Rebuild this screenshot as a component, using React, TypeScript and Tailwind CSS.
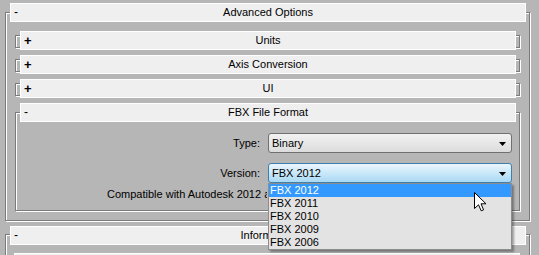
const etched = "box-border border border-[#7b7b7b] shadow-[inset_1px_1px_0_#ffffff,1px_1px_0_#ffffff]";
const header =
  "box-border h-[19px] border border-white bg-[#efefef] flex items-center relative";

function Header({ title, sign, width, className = "", clip }: { title: string; sign: string; width: string; className?: string; clip?: string }) {
  return (
    <div className={header + " " + width + " " + className}>
      <span className={"absolute left-[3px] top-[1px] leading-[15px] " + (sign === "+" ? "font-bold text-[13px]" : "text-[12px]")}>
        {sign}
      </span>
      {clip ? (
        <div className={"h-[15px] overflow-hidden " + clip}>
          <div className="w-[514px] text-center leading-[15px]">{title}</div>
        </div>
      ) : (
        <span className="w-full text-center leading-[15px]">{title}</span>
      )}
    </div>
  );
}

function Collapsed({ title, mt }: { title: string; mt: string }) {
  return (
    <div className={etched + " ml-[9px] w-[505px] h-[13px] " + mt}>
      <Header title={title} sign="+" width="w-[496px]" className="-mt-[5px] ml-[4px]" />
    </div>
  );
}

function Arrow() {
  return (
    <svg width="7" height="4" viewBox="0 0 7 4" className="absolute right-[5px] top-[8px]">
      <polygon points="0,0 7,0 3.5,4" fill="#000" />
    </svg>
  );
}

export default function App() {
  const versions = ["FBX 2012", "FBX 2011", "FBX 2010", "FBX 2009", "FBX 2006"];
  return (
    <div
      className="relative w-[539px] h-[255px] overflow-hidden bg-[#b6b6b6] text-[11px] text-black"
      style={{ fontFamily: '"Liberation Sans", Arial, sans-serif' }}
    >
      {/* Advanced Options */}
      <div className={etched + " mt-[12px] ml-[5px] w-[525px] h-[209px]"}>
        <Header title="Advanced Options" sign="-" width="w-[516px]" className="-mt-[10px] ml-[4px]" />

        <Collapsed title="Units" mt="mt-[13px]" />
        <Collapsed title="Axis Conversion" mt="mt-[11px]" />
        <Collapsed title="UI" mt="mt-[11px]" />

        {/* FBX File Format */}
        <div className={etched + " mt-[16px] ml-[9px] w-[505px] h-[99px]"}>
          <Header title="FBX File Format" sign="-" width="w-[496px]" className="-mt-[10px] ml-[4px]" />

          <div className="mt-[11px] flex items-center gap-[8px]">
            <span className="w-[244px] text-right">Type:</span>
            <div className="relative box-border h-[20px] w-[244px] rounded-[3px] border border-[#707070] bg-gradient-to-b from-[#f2f2f2] to-[#dcdcdc] pl-[3px] leading-[18px]">
              Binary
              <Arrow />
            </div>
          </div>

          <div className="mt-[10px] flex items-center gap-[8px]">
            <span className="w-[244px] text-right">Version:</span>
            <div className="relative box-border h-[20px] w-[244px] rounded-[3px] border border-[#3c7fb1] bg-gradient-to-b from-[#eaf6fd] to-[#a9d9f4] pl-[3px] leading-[18px]">
              FBX 2012
              <Arrow />
            </div>
          </div>

          <div className="mt-[5px] ml-[91px] w-[160px] overflow-hidden leading-[13px] whitespace-nowrap">
            Compatible with Autodesk 2012 applications
          </div>
        </div>
      </div>

      {/* Information */}
      <div className={etched + " mt-[13px] ml-[5px] w-[525px] h-[60px]"}>
        <Header title="Information" sign="-" width="w-[516px]" className="-mt-[9px] ml-[4px]" clip="w-[257px]" />
        <div className="mt-[8px] ml-[8px] h-[19px] w-[506px] border border-white bg-[#efefef]" />
      </div>

      {/* Dropdown list */}
      <div className="absolute left-[268px] top-[183px] box-border w-[244px] h-[67px] border border-[#8c8c8c] bg-[#e3e3e3] shadow-[2px_2px_2px_rgba(0,0,0,0.35)]">
        {versions.map((v, i) => (
          <div
            key={v}
            className={"h-[13px] pl-[1px] leading-[13px] " + (i === 0 ? "bg-[#3399ff] text-white" : "")}
          >
            {v}
          </div>
        ))}
      </div>

      {/* Mouse cursor */}
      <svg width="13" height="20" viewBox="0 0 13 20" className="absolute left-[474px] top-[192px]">
        <polygon
          points="0.5,0.5 0.5,16.5 4.5,12.8 7.2,18.8 9.6,17.8 7,11.8 12,11.8"
          fill="#ffffff"
          stroke="#000000"
          strokeWidth="1"
          strokeLinejoin="miter"
        />
      </svg>
    </div>
  );
}
